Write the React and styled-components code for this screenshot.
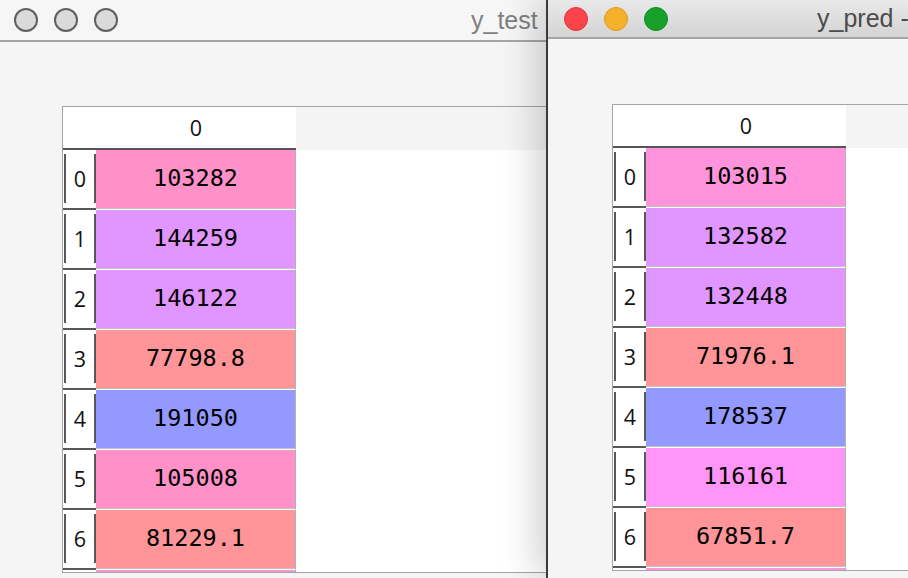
import React from "react";
import styled, { css, createGlobalStyle } from "styled-components";

const GlobalStyle = createGlobalStyle`
	html, body {
		margin: 0;
		padding: 0;
		overflow: hidden;
		background: #f5f5f5;
	}
	#root {
		height: 578px;
	}
`;

const MONO = `"DejaVu Sans Mono", "Liberation Mono", monospace`;
const SANS = `"Open Sans", "DejaVu Sans", sans-serif`;

const Desktop = styled.div`
	display: flex;
	width: 908px;
	height: 578px;
	overflow: hidden;
`;

const Window = styled.div`
	display: flex;
	flex-direction: column;
	overflow: hidden;
	background: #f5f5f5;
	${({ $active }) =>
		$active
			? css`
					flex: 1;
					position: relative;
					border-left: 2px solid #3a3a3a;
					box-shadow: -8px 0 36px rgba(0, 0, 0, 0.2);
			  `
			: css`
					width: 546px;
					flex-shrink: 0;
			  `}
`;

const TitleBar = styled.div`
	display: flex;
	align-items: center;
	flex-shrink: 0;
	height: ${({ $active }) => ($active ? 37 : 40)}px;
	padding-left: ${({ $active }) => ($active ? 16 : 14)}px;
	border-bottom: 2px solid #a6a6a6;
	background: ${({ $active }) =>
		$active ? "linear-gradient(#e9e9e9, #d4d4d4)" : "#f6f6f6"};
`;

const Lights = styled.div`
	display: flex;
	gap: 16px;
	flex-shrink: 0;
`;

const Light = styled.span`
	width: 24px;
	height: 24px;
	border-radius: 50%;
	box-sizing: border-box;
	background: ${({ $fill }) => $fill};
	border: ${({ $ring }) => $ring};
`;

const Title = styled.div`
	margin-left: ${({ $offset }) => $offset}px;
	font-family: "Liberation Sans", Arial, sans-serif;
	font-size: 25px;
	white-space: nowrap;
	color: ${({ $active }) => ($active ? "#4b4b4b" : "#808080")};
`;

const Content = styled.div`
	flex: 1;
	padding: ${({ $top }) => $top}px 0 0 ${({ $left }) => $left}px;
`;

const Frame = styled.div`
	width: 700px;
	height: 465px;
	border: 1px solid #a4a4a4;
	border-right: none;
	background: #fff;
	overflow: hidden;
`;

const HeaderRow = styled.div`
	display: flex;
	height: 43px;
	background: #f4f4f4;
`;

const Corner = styled.div`
	width: 33px;
	background: #fff;
	border-bottom: 2px solid #555;
`;

const ColHeader = styled.div`
	width: 200px;
	display: flex;
	align-items: center;
	justify-content: center;
	background: #fff;
	border-bottom: 2px solid #555;
	font-family: ${SANS};
	font-size: 21.5px;
	color: #111;
`;

const Row = styled.div`
	display: flex;
	height: 60px;
`;

const IndexCell = styled.div`
	width: 33px;
	box-sizing: border-box;
	display: flex;
	padding: 4px 0 5px 1px;
	background: #fff;
	border-bottom: 2px solid #585858;
`;

const IndexLabel = styled.div`
	flex: 1;
	display: flex;
	align-items: center;
	justify-content: center;
	border-left: 2px solid #585858;
	border-right: 2px solid #585858;
	font-family: ${SANS};
	font-size: 21.5px;
	color: #111;
`;

const ValueCell = styled.div`
	width: 200px;
	box-sizing: border-box;
	display: flex;
	align-items: center;
	justify-content: center;
	padding-bottom: 3px;
	background: ${({ $bg }) => $bg};
	border-right: 1px solid #b2b2b2;
	border-bottom: 1px solid #fff;
	box-shadow: inset 0 -1px 0 #c2c2c2;
	font-family: ${MONO};
	font-size: 23.5px;
	color: #000;
`;

const yTest = [
	["0", "103282", "#ff91c8"],
	["1", "144259", "#e095ff"],
	["2", "146122", "#e095ff"],
	["3", "77798.8", "#ff9499"],
	["4", "191050", "#9499ff"],
	["5", "105008", "#ff91c8"],
	["6", "81229.1", "#ff9499"],
	["", "", "#ff93cc"],
];

const yPred = [
	["0", "103015", "#ff93dc"],
	["1", "132582", "#e195ff"],
	["2", "132448", "#e195ff"],
	["3", "71976.1", "#ff9499"],
	["4", "178537", "#9499ff"],
	["5", "116161", "#ff95f6"],
	["6", "67851.7", "#ff9499"],
	["", "", "#ff95e0"],
];

const inactiveLights = [
	{ fill: "#dadada", ring: "2px solid #5f5f5f" },
	{ fill: "#dadada", ring: "2px solid #5f5f5f" },
	{ fill: "#dadada", ring: "2px solid #5f5f5f" },
];

const activeLights = [
	{ fill: "#fc4349", ring: "1px solid #de363c" },
	{ fill: "#f5b12c", ring: "1px solid #d99a20" },
	{ fill: "#17a12a", ring: "1px solid #118a22" },
];

const ArrayTable = ({ rows }) => (
	<Frame>
		<HeaderRow>
			<Corner />
			<ColHeader>0</ColHeader>
		</HeaderRow>
		{rows.map(([idx, value, bg], i) => (
			<Row key={i}>
				<IndexCell>
					<IndexLabel>{idx}</IndexLabel>
				</IndexCell>
				<ValueCell $bg={bg}>{value}</ValueCell>
			</Row>
		))}
	</Frame>
);

const ArrayWindow = ({ active, title, titleOffset, lights, rows, top, left }) => (
	<Window $active={active}>
		<TitleBar $active={active}>
			<Lights>
				{lights.map((l, i) => (
					<Light key={i} $fill={l.fill} $ring={l.ring} />
				))}
			</Lights>
			<Title $active={active} $offset={titleOffset}>
				{title}
			</Title>
		</TitleBar>
		<Content $top={top} $left={left}>
			<ArrayTable rows={rows} />
		</Content>
	</Window>
);

export default function App() {
	return (
		<>
			<GlobalStyle />
			<Desktop>
				<ArrayWindow
					title="y_test"
					titleOffset={353}
					lights={inactiveLights}
					rows={yTest}
					top={64}
					left={62}
				/>
				<ArrayWindow
					active
					title="y_pred -"
					titleOffset={149}
					lights={activeLights}
					rows={yPred}
					top={65}
					left={64}
				/>
			</Desktop>
		</>
	);
}
